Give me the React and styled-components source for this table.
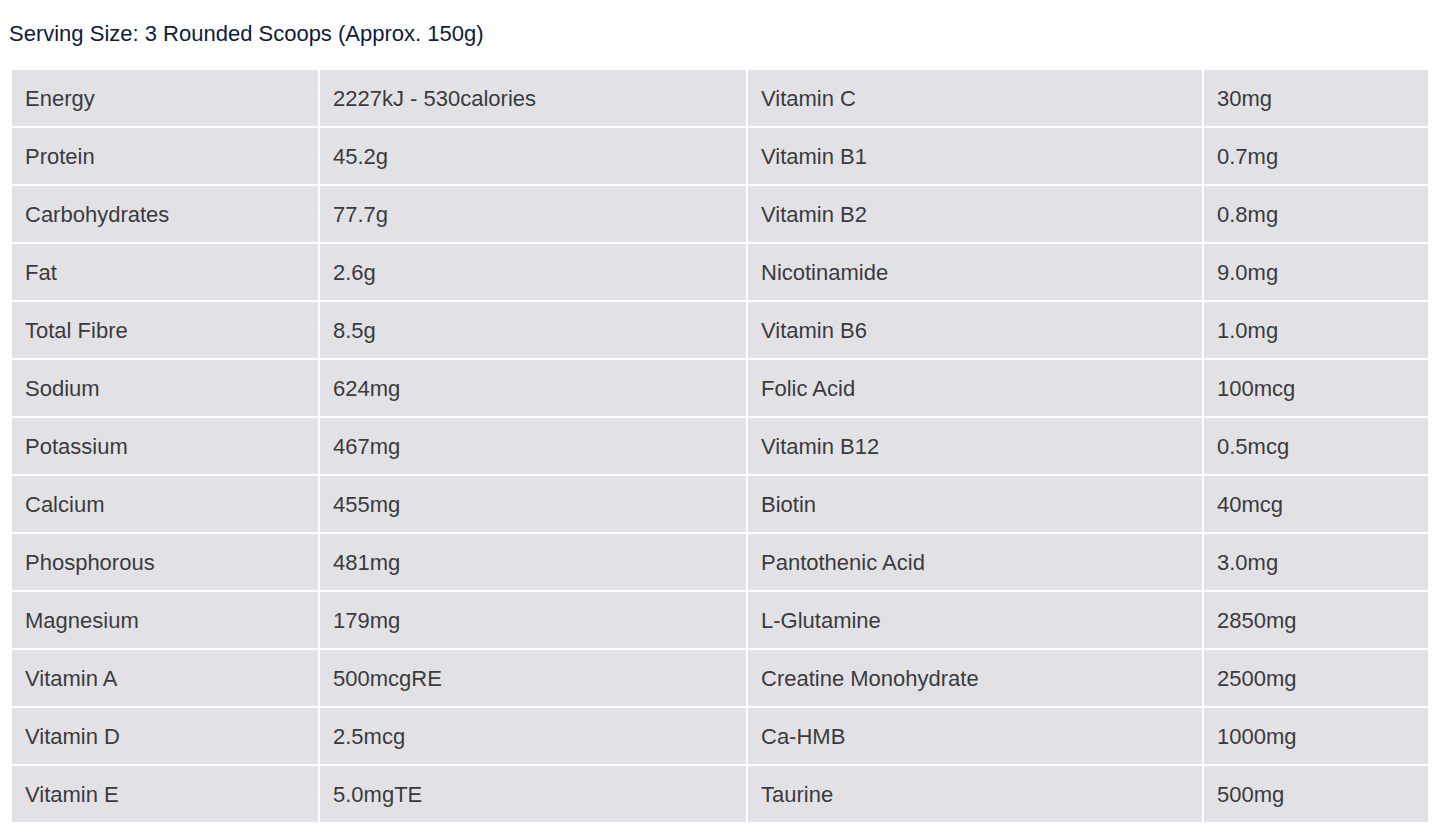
import React from "react";
import styled, { createGlobalStyle } from "styled-components";

const GlobalStyle = createGlobalStyle`
  html, body { margin: 0; padding: 0; background: #ffffff; }
  body { font-family: "Liberation Sans", Arial, Helvetica, sans-serif; }
`;

const Page = styled.div`
  padding: 21px 8px 0 9px;
`;

const Heading = styled.p`
  margin: 0 0 22px 0;
  font-size: 22px;
  line-height: 25px;
  color: #0e1b3d;
`;

const Table = styled.table`
  border-collapse: separate;
  border-spacing: 2px;
  table-layout: fixed;
  width: 1420px;
  margin-left: 1px;
`;

const Col = styled.col`
  width: ${(p) => p.$w}px;
`;

const Cell = styled.td`
  background: #e2e2e6;
  height: 56px;
  padding: 0 13px;
  box-sizing: border-box;
  vertical-align: middle;
  font-size: 22px;
  line-height: 25px;
  color: #3b3b3d;
  white-space: nowrap;
`;

const colWidths = [306, 426, 454, 224];

const rows = [
  ["Energy", "2227kJ - 530calories", "Vitamin C", "30mg"],
  ["Protein", "45.2g", "Vitamin B1", "0.7mg"],
  ["Carbohydrates", "77.7g", "Vitamin B2", "0.8mg"],
  ["Fat", "2.6g", "Nicotinamide", "9.0mg"],
  ["Total Fibre", "8.5g", "Vitamin B6", "1.0mg"],
  ["Sodium", "624mg", "Folic Acid", "100mcg"],
  ["Potassium", "467mg", "Vitamin B12", "0.5mcg"],
  ["Calcium", "455mg", "Biotin", "40mcg"],
  ["Phosphorous", "481mg", "Pantothenic Acid", "3.0mg"],
  ["Magnesium", "179mg", "L-Glutamine", "2850mg"],
  ["Vitamin A", "500mcgRE", "Creatine Monohydrate", "2500mg"],
  ["Vitamin D", "2.5mcg", "Ca-HMB", "1000mg"],
  ["Vitamin E", "5.0mgTE", "Taurine", "500mg"],
];

export default function App() {
  return (
    <>
      <GlobalStyle />
      <Page>
        <Heading>Serving Size: 3 Rounded Scoops (Approx. 150g)</Heading>
        <Table>
          <colgroup>
            {colWidths.map((w, i) => (
              <Col key={i} $w={w} />
            ))}
          </colgroup>
          <tbody>
            {rows.map((r) => (
              <tr key={r[0]}>
                {r.map((c, i) => (
                  <Cell key={i}>{c}</Cell>
                ))}
              </tr>
            ))}
          </tbody>
        </Table>
      </Page>
    </>
  );
}
